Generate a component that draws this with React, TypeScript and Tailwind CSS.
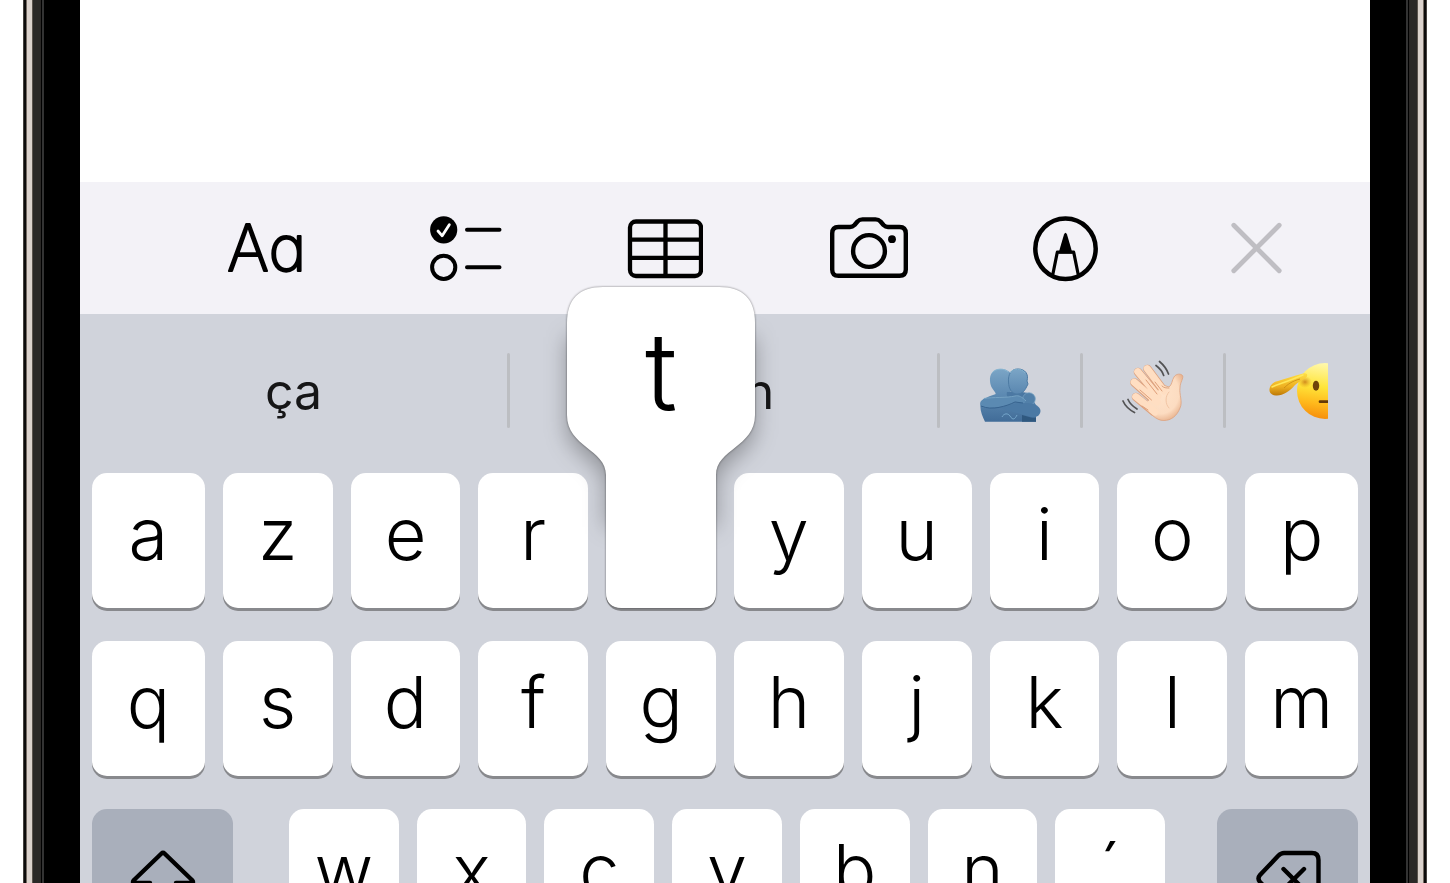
import React from "react";

const topRow = ["a", "z", "e", "r", "t", "y", "u", "i", "o", "p"];
const middleRow = ["q", "s", "d", "f", "g", "h", "j", "k", "l", "m"];
const bottomRow = ["w", "x", "c", "v", "b", "n", "´"];

function PhoneEdge({ mirrored = false }: { mirrored?: boolean }) {
  return (
    <div className={mirrored ? "flex shrink-0 flex-row-reverse" : "flex shrink-0"} aria-hidden="true">
      <div className="w-[23px] bg-white" />
      <div className="w-px bg-[#45413e]" />
      <div className="w-0.5 bg-[#0c0b0a]" />
      <div className="w-px bg-[#746a62]" />
      <div className="w-[5px] bg-[#dbd2cc]" />
      <div className="w-px bg-[#5b544d]" />
      <div className="w-2 bg-[#2a2826]" />
      <div className="w-px bg-black" />
      <div className="w-0.5 bg-[#333333]" />
      <div className="w-9 bg-black" />
    </div>
  );
}

function TextFormatIcon() {
  return (
    <svg width="76" height="66" viewBox="0 0 76 66" className="overflow-visible" aria-hidden="true">
      <text
        x="-1"
        y="55"
        fontSize="64"
        stroke="#000"
        strokeWidth="2"
        strokeLinejoin="round"
        className="font-['Inter',sans-serif] font-extralight [font-feature-settings:'cv11']"
      >
        Aa
      </text>
    </svg>
  );
}

function ChecklistIcon() {
  return (
    <svg width="72" height="66" viewBox="0 0 72 66" fill="none" stroke="#000" strokeWidth="4" strokeLinecap="round" strokeLinejoin="round" aria-hidden="true">
      <circle cx="13.7" cy="13.8" r="13.6" fill="#000" stroke="none" />
      <path d="M8 15 L12.2 19.8 L19.3 8.8" stroke="#fff" strokeWidth="2.8" />
      <circle cx="13.7" cy="51.3" r="11.6" />
      <path d="M37 13.8 H69.500 M37 51.300 H69.500" />
    </svg>
  );
}

function TableIcon() {
  return (
    <svg width="76" height="66" viewBox="0 0 76 66" fill="none" stroke="#000" strokeWidth="4.300" aria-hidden="true">
      <rect x="3" y="5.500" width="71" height="54.500" rx="6" />
      <path d="M3 23.600 H74 M3 41.800 H74 M38.500 5 V60" />
    </svg>
  );
}

function CameraIcon() {
  return (
    <svg width="78" height="66" viewBox="-1 0 78 66" className="overflow-visible" fill="none" stroke="#000" strokeWidth="4.400" strokeLinejoin="round" aria-hidden="true">
      <path d="M8.500 11 H20 Q22.500 11 24.500 9 L27.500 5.500 Q29.500 3.400 32.500 3.400 H45.500 Q48.500 3.400 50.500 5.500 L53.500 9 Q55.500 11 58 11 H69.500 Q75.800 11 75.800 17.500 V53.500 Q75.800 59.800 69.500 59.800 H8.500 Q2.200 59.800 2.200 53.500 V17.500 Q2.200 11 8.500 11 Z" />
      <circle cx="39" cy="35" r="15.900" />
      <circle cx="62" cy="23.200" r="3.900" fill="#000" stroke="none" />
    </svg>
  );
}

function MarkupIcon() {
  return (
    <svg width="65" height="66" viewBox="-1 0 65 66" className="overflow-visible" fill="none" stroke="#000" strokeLinecap="round" strokeLinejoin="round" aria-hidden="true">
      <circle cx="32.500" cy="32.700" r="30.200" strokeWidth="4.500" />
      <path d="M20 57.500 L24.300 36.200 H40.700 L45 57.500" strokeWidth="3.200" />
      <path d="M25.500 37.500 Q27 32 31 18.500 Q32.500 14.800 34 18.500 Q38 32 39.500 37.500 Z" fill="#000" stroke="none" />
    </svg>
  );
}

function CloseIcon() {
  return (
    <svg width="59" height="66" viewBox="-8 0 59 66" stroke="#bfbec3" strokeWidth="4.800" strokeLinecap="round" aria-hidden="true">
      <path d="M2.800 9.300 L48.200 54.700 M48.200 9.300 L2.800 54.700" />
    </svg>
  );
}

function HugEmoji() {
  return (
    <svg width="62" height="62" viewBox="0 0 62 62" aria-hidden="true">
      <defs>
        <linearGradient id="hug-head" x1="0" y1="0" x2="0" y2="1">
          <stop offset="0" stopColor="#7ba5c6" />
          <stop offset="1" stopColor="#5a87b0" />
        </linearGradient>
        <linearGradient id="hug-body" x1="0" y1="0" x2="0" y2="1">
          <stop offset="0" stopColor="#5f8cb3" />
          <stop offset="1" stopColor="#416c98" />
        </linearGradient>
      </defs>
      <path d="M17 34 C11 36 5 38 2 42 C0 48 3 56 6 61.700 H57 V56 L60 50 L54 40 L43 33 Z" fill="url(#hug-body)" />
      <path d="M21 9 C14 9 10.500 14 11 21 C11.300 27 14 29 16.500 33 L17 37 H30 L33 28 V15 C30 10 26 9 21 9 Z" fill="url(#hug-head)" />
      <path d="M13 13 C17 8 25 8 29 12" stroke="#88b6d2" strokeWidth="1" fill="none" />
      <path d="M28 32 C27 36 29 39 34 39 L51 42 L49 33 L43 32 Z" fill="#4b78a3" />
      <path d="M39 9 C32 9 29 14 29.500 22 C29.700 29 33 34 38 34 C44 34 46 30 47.500 27 L49 24 L48 21 C50 14 46 9 39 9 Z" fill="url(#hug-head)" stroke="#4d7ba4" strokeWidth="1" />
      <path d="M31 13 C34 8 43 8 46 13" stroke="#83b2cf" strokeWidth="1" fill="none" />
      <circle cx="50" cy="39" r="6.300" fill="#5280a9" stroke="#79a4c3" strokeWidth=".7" />
      <path d="M48 43 C56 43 61.500 47 61.500 51 C61 56 57 58 52 57 L34 52 L22 48 L37 43 Z" fill="#4b79a4" />
      <path d="M5 38.500 C14 37 28 38 36 36 C40 35 43 37 47 41 L44 43 L36 41.500 C30 46 15 48 7 48 C2 48 0 44 2 41 Z" fill="#5b8ab2" />
      <path d="M5 38.500 C14 37 28 38 36 36 C40 35 43 37 47 41" fill="none" stroke="#75a2c3" strokeWidth="1" />
      <path d="M2 46 C13 51 28 46 36 42 L44 43" fill="none" stroke="#37638f" strokeWidth="1" />
      <path d="M43 55 L52 57.500 Q55 58 57 57.500 V61.700 H43 Z" fill="#2f587f" />
      <path d="M23 57 C25 53 29 53 31 56 C34 61 36 59 38 55" fill="none" stroke="#75a7cb" strokeWidth="1" />
    </svg>
  );
}

function WaveEmoji() {
  return (
    <svg width="62" height="62" viewBox="0 0 62 62" fill="none" strokeLinecap="round" aria-hidden="true">
      <defs>
        <radialGradient id="palm" cx=".45" cy=".4" r=".65">
          <stop offset="0" stopColor="#ffe3ca" />
          <stop offset=".7" stopColor="#fcdcc1" />
          <stop offset="1" stopColor="#e7b08b" />
        </radialGradient>
      </defs>
      <path d="M25.500 9 L42 31 M16 12 L36 36 M12.500 22.500 L34 42 M14 37 L32 52" stroke="#dda27f" strokeWidth="8.600" />
      <path d="M27 40 L41 25 L47 27 C50 25 50 20 52 17 C54 13.500 59 13.500 60.500 15.500 C62 18 58 22 58 28 C57 34 61 42 58 48 C55 56 49 60.500 42 60.500 C34 61 27 52 20 45 Z" fill="url(#palm)" stroke="#dda27f" strokeWidth=".8" />
      <path d="M25.200 8.600 L42 31 M15.700 11.600 L36 36 M12.200 22.100 L35 42 M13.700 36.600 L33 52" stroke="#ffdec2" strokeWidth="7" />
      <path d="M24 20 L35 34 M18 30 L29.500 40 M20 46 L26 50 M33 22 L40 31" stroke="#df9e79" strokeWidth="1" />
      <path d="M47 28 C44 28 42 28 40 26" stroke="#dba27e" strokeWidth="1" />
      <path d="M47 32 C43 36 43 44 47 48" stroke="#f2c5a4" strokeWidth="1" />
      <path d="M37.500 1.500 Q44 7 46.500 14 M34 5.500 Q40 10 41.700 15.500 M1 41 Q4 48 12.500 52.500 M6 39.500 Q8.500 45 15 49" stroke="#535354" strokeWidth="1.700" />
    </svg>
  );
}

function SaluteEmoji() {
  return (
    <svg width="59" height="62" viewBox="0 0 59 62" aria-hidden="true">
      <defs>
        <linearGradient id="face" x1=".45" y1="0" x2=".3" y2="1">
          <stop offset="0" stopColor="#fff8ac" />
          <stop offset=".42" stopColor="#ffe53a" />
          <stop offset=".72" stopColor="#ffb91c" />
          <stop offset="1" stopColor="#f58b0b" />
        </linearGradient>
        <linearGradient id="salute-hand" x1="0" y1="0" x2="0" y2="1">
          <stop offset="0" stopColor="#ffdf45" />
          <stop offset=".6" stopColor="#eeb021" />
          <stop offset="1" stopColor="#bd7806" />
        </linearGradient>
        <radialGradient id="temple">
          <stop offset="0" stopColor="#b75b09" stopOpacity=".65" />
          <stop offset="1" stopColor="#e18a12" stopOpacity="0" />
        </radialGradient>
      </defs>
      <ellipse cx="56" cy="31" rx="28" ry="28" fill="url(#face)" />
      <ellipse cx="36" cy="22" rx="7" ry="6" fill="url(#temple)" />
      <path d="M.5 29 C1 25 4 22 9 21 C16 19 24 16 34 13.500 C38 12.500 39.500 15 37 17.500 C34 20 29 22 26 25 C21 31 14 35.500 8 35.500 C3 36 0 33 .5 29 Z" fill="url(#salute-hand)" />
      <path d="M3 27 C10 24 20 21 34 15" fill="none" stroke="#ffe75b" strokeWidth="1.500" strokeLinecap="round" />
      <path d="M15 28 C18 25 23 21 31 19" fill="none" stroke="#c78813" strokeWidth=".8" />
      <ellipse cx="47" cy="25.700" rx="3.200" ry="5" fill="#704409" />
      <path d="M51 41.700 H60" stroke="#653906" strokeWidth="2.700" strokeLinecap="round" />
    </svg>
  );
}

function ShiftIcon() {
  return (
    <svg width="66" height="60" viewBox="0 0 66 60" fill="none" stroke="#000" strokeWidth="4.400" strokeLinejoin="round" aria-hidden="true">
      <path d="M31.500 3.500 Q33 2 34.500 3.500 L62 30 Q64.500 33 61 33 H46 V52 Q46 56 42 56 H24 Q20 56 20 52 V33 H5 Q1.500 33 4 30 Z" />
    </svg>
  );
}

function DeleteIcon() {
  return (
    <svg width="66" height="60" viewBox="-1 0 66 60" fill="none" stroke="#000" strokeWidth="4.400" strokeLinejoin="round" strokeLinecap="round" aria-hidden="true">
      <path d="M28 3 H56 Q62.500 3 62.500 10 V47 Q62.500 54 56 54 H28 Q25 54 22 51 L4 32 Q1 28.500 4 25 L22 6 Q25 3 28 3 Z" />
      <path d="M27.500 19 L48 39.500 M48 19 L27.500 39.500" />
    </svg>
  );
}

function KeyPopup({ letter }: { letter: string }) {
  return (
    <span className="pointer-events-none absolute bottom-0 left-1/2 z-10 flex w-[188px] -translate-x-1/2 flex-col">
      <svg className="w-full overflow-visible" height="321" viewBox="0 0 188 321" aria-hidden="true">
        <defs>
          <filter id="popup-blur" x="-30%" y="-30%" width="160%" height="160%">
            <feGaussianBlur stdDeviation="11" />
          </filter>
          <clipPath id="below-toolbar">
            <rect x="-60" y="27" width="308" height="292" />
          </clipPath>
        </defs>
        <g clipPath="url(#below-toolbar)">
          <path
            d="M0 50 H188 V140 C188 168 149 172 149 200 V240 H39 V200 C39 172 0 168 0 140 Z"
            fill="#000"
            fillOpacity=".3"
            filter="url(#popup-blur)"
          />
        </g>
        <path
          className="[filter:drop-shadow(0_0_1px_rgba(0,0,0,0.5))]"
          d="M0 36 C0 12 12 0 36 0 H152 C176 0 188 12 188 36 V128 C188 160 149 162 149 188 V305 Q149 321 133 321 H55 Q39 321 39 305 V188 C39 162 0 160 0 128 Z"
          fill="#fff"
        />
      </svg>
      <span className="absolute inset-x-0 top-0 pt-[18px] text-center text-[108px] leading-[132px]">{letter}</span>
    </span>
  );
}

function LetterKey({ letter, pressed = false }: { letter: string; pressed?: boolean }) {
  return (
    <button
      type="button"
      aria-label={letter}
      className="relative flex h-[135px] min-w-0 items-center justify-center rounded-[15px] bg-white pb-3.5 text-[72px] leading-none font-[340] text-black shadow-[0_3px_0_#88898d]"
    >
      {pressed ? <KeyPopup letter={letter} /> : letter}
    </button>
  );
}

function Divider() {
  return <div className="w-[3px] shrink-0 rounded-full bg-[#bcbec2]" />;
}

function Toolbar() {
  const tools = [
    { label: "Text format", icon: <TextFormatIcon /> },
    { label: "Checklist", icon: <ChecklistIcon /> },
    { label: "Table", icon: <TableIcon /> },
    { label: "Camera", icon: <CameraIcon /> },
    { label: "Markup", icon: <MarkupIcon /> },
    { label: "Close", icon: <CloseIcon /> },
  ];
  return (
    <div className="flex h-[132px] shrink-0 items-center justify-between bg-[#f3f2f7] pt-0.5 pr-[88px] pl-[148px]">
      {tools.map((tool) => (
        <button key={tool.label} type="button" aria-label={tool.label}>
          {tool.icon}
        </button>
      ))}
    </div>
  );
}

function Suggestions() {
  const word = "flex min-w-0 flex-[427] items-center justify-center text-[50px] leading-none text-[#161617]";
  const emoji = "flex min-w-0 flex-[140] items-center justify-center";
  return (
    <div className="flex h-[159px] pt-[39px] pb-[45px]">
      <button type="button" className={word}>ça</button>
      <Divider />
      <button type="button" className={word}>bien</button>
      <Divider />
      <button type="button" aria-label="People hugging" className={emoji}><HugEmoji /></button>
      <Divider />
      <button type="button" aria-label="Waving hand" className={emoji}><WaveEmoji /></button>
      <Divider />
      <button type="button" aria-label="Saluting face" className="flex min-w-0 flex-[144] items-center justify-center"><SaluteEmoji /></button>
    </div>
  );
}

export default function App() {
  const row = "grid grid-cols-[113fr_repeat(8,110fr)_113fr] gap-x-[18px]";
  const darkKey = "flex h-[135px] min-w-0 justify-center rounded-[15px] bg-[#a9afbb] pt-[41px] shadow-[0_3px_0_#88898d]";
  return (
    <div className="flex h-screen overflow-hidden bg-white font-['Inter',sans-serif]">
      <PhoneEdge />
      <main className="flex min-w-0 flex-1 flex-col">
        <div className="h-[182px] shrink-0 bg-white" />
        <Toolbar />
        <section aria-label="Keyboard" className="shrink-0 bg-[#d0d3db] pb-8">
          <Suggestions />
          <div className="flex flex-col gap-[33px] px-3">
            <div className={row}>
              {topRow.map((letter) => (
                <LetterKey key={letter} letter={letter} pressed={letter === "t"} />
              ))}
            </div>
            <div className={row}>
              {middleRow.map((letter) => (
                <LetterKey key={letter} letter={letter} />
              ))}
            </div>
            <div className="grid grid-cols-[141fr_880fr_141fr] gap-x-[52px]">
              <button type="button" aria-label="Shift" className={darkKey}><ShiftIcon /></button>
              <div className="grid grid-cols-7 gap-x-[18px] pl-1">
                {bottomRow.map((letter) => (
                  <LetterKey key={letter} letter={letter} />
                ))}
              </div>
              <button type="button" aria-label="Delete" className={darkKey}><DeleteIcon /></button>
            </div>
          </div>
        </section>
      </main>
      <PhoneEdge mirrored />
    </div>
  );
}
